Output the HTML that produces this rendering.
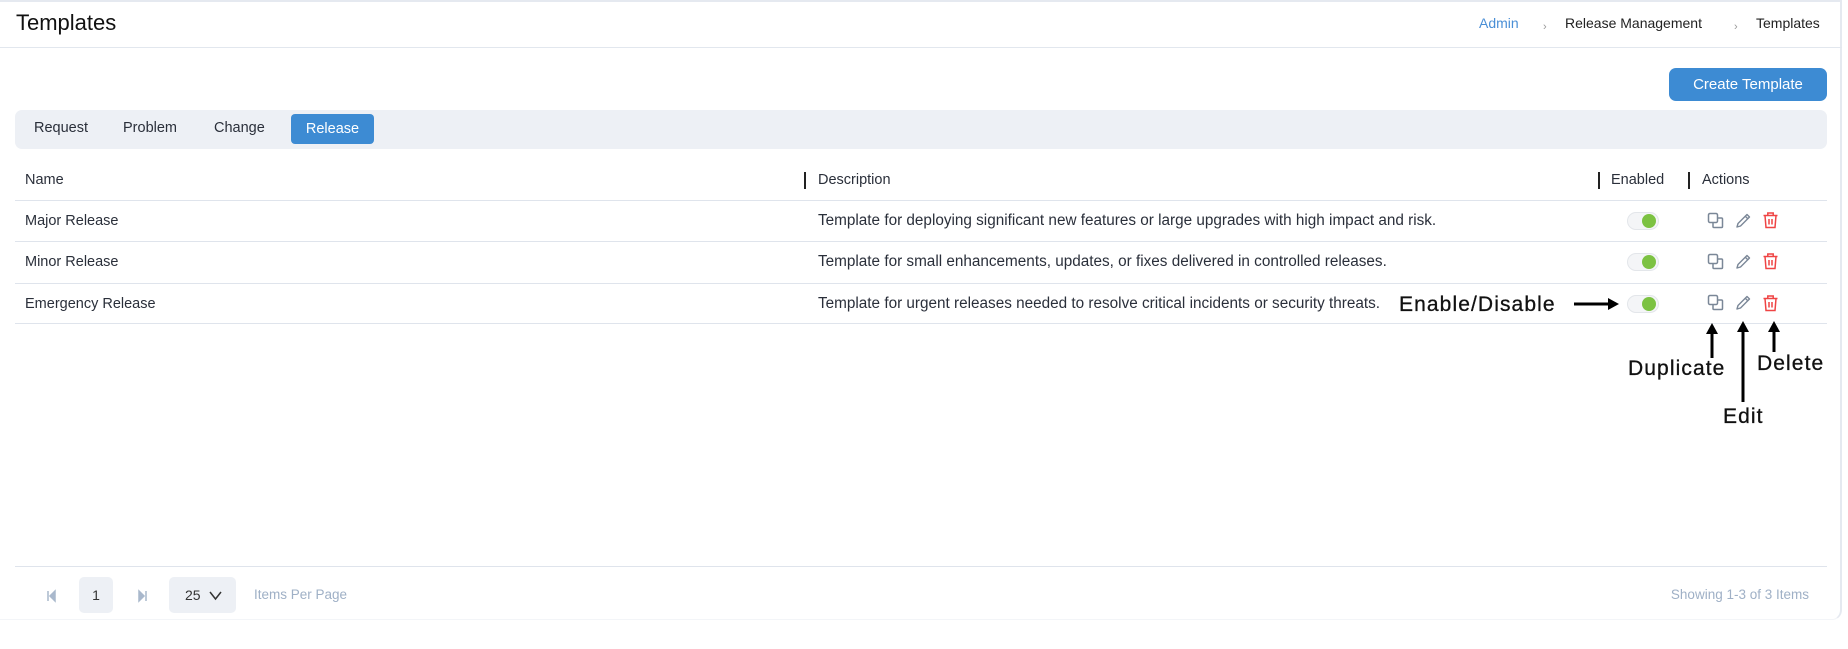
<!DOCTYPE html>
<html><head><meta charset="utf-8"><style>
*{box-sizing:border-box;margin:0;padding:0}
body{width:1848px;height:649px;background:#fff;font-family:"Liberation Sans",sans-serif;position:relative;overflow:hidden;color:#1f2937}
.abs{position:absolute;white-space:nowrap}
.card{position:absolute;left:0;top:0;width:1842px;height:620px;border-top:2px solid #e5e9f0;border-right:2px solid #e5e9f0;border-bottom:1px solid #f3f5f8;border-bottom-right-radius:10px}
.t{font-size:14.5px;color:#2a2f3a}
.d{font-size:15.3px;color:#2a2f3a}
.h{font-size:14.5px;color:#2a2f3a}
.line{position:absolute;left:15px;width:1812px;height:1px;background:#dfe4ec}
.sep{position:absolute;width:1.5px;height:17px;background:#222}
.tog{position:absolute;left:1627px;width:32px;height:18px;border-radius:9px;background:#f4f5f7;border:1px solid #e3e6ea}
.tog i{position:absolute;right:2px;top:1px;width:14px;height:14px;border-radius:50%;background:#7cc242}
.ann{font-size:21px;color:#111;letter-spacing:1.1px;-webkit-text-stroke:0.3px #111}
</style></head><body>
<div class="card"></div>
<div class="abs" style="left:16px;top:10px;font-size:22px;color:#111">Templates</div>
<div class="abs" style="left:0;top:47px;width:1842px;height:1px;background:#e2e7ee"></div>
<div class="abs" style="left:1479px;top:15px;font-size:14px;color:#4a8fd6">Admin</div>
<div class="abs" style="left:1543px;top:21px;font-size:11px;color:#999">›</div>
<div class="abs" style="left:1565px;top:15px;font-size:14px;color:#222">Release Management</div>
<div class="abs" style="left:1734px;top:21px;font-size:11px;color:#999">›</div>
<div class="abs" style="left:1756px;top:15px;font-size:14px;color:#222">Templates</div>

<div class="abs" style="left:1669px;top:68px;width:158px;height:33px;background:#3d8bd3;border-radius:7px;color:#fff;font-size:15px;text-align:center;line-height:33px">Create Template</div>

<div class="abs" style="left:15px;top:110px;width:1812px;height:39px;background:#edf0f5;border-radius:7px"></div>
<div class="abs t" style="left:34px;top:120px">Request</div>
<div class="abs t" style="left:123px;top:120px">Problem</div>
<div class="abs t" style="left:214px;top:120px">Change</div>
<div class="abs" style="left:291px;top:114px;width:83px;height:30px;background:#3d8bd3;border-radius:4px;color:#fff;font-size:14.5px;text-align:center;line-height:30px">Release</div>

<div class="abs h" style="left:25px;top:172px">Name</div>
<div class="sep" style="left:804px;top:172px"></div>
<div class="abs h" style="left:818px;top:172px">Description</div>
<div class="sep" style="left:1598px;top:172px"></div>
<div class="abs h" style="left:1611px;top:172px">Enabled</div>
<div class="sep" style="left:1688px;top:172px"></div>
<div class="abs h" style="left:1702px;top:172px">Actions</div>
<div class="line" style="top:200px"></div>

<div class="abs t" style="left:25px;top:213px">Major Release</div>
<div class="abs d" style="left:818px;top:212px">Template for deploying significant new features or large upgrades with high impact and risk.</div>
<div class="line" style="top:241px"></div>
<div class="abs t" style="left:25px;top:254px">Minor Release</div>
<div class="abs d" style="left:818px;top:253px">Template for small enhancements, updates, or fixes delivered in controlled releases.</div>
<div class="line" style="top:283px"></div>
<div class="abs t" style="left:25px;top:296px">Emergency Release</div>
<div class="abs d" style="left:818px;top:295px">Template for urgent releases needed to resolve critical incidents or security threats.</div>
<div class="line" style="top:323px"></div>

<div class="tog" style="top:212px"><i></i></div>
<div class="tog" style="top:253px"><i></i></div>
<div class="tog" style="top:295px"><i></i></div>

<div class="line" style="top:566px"></div>
<div class="abs" style="left:79px;top:577px;width:34px;height:36px;background:#edf0f5;border-radius:5px;text-align:center;line-height:36px;font-size:14px;color:#333">1</div>
<div class="abs" style="left:169px;top:577px;width:67px;height:36px;background:#edf0f5;border-radius:5px;font-size:14px;color:#333;line-height:36px;padding-left:16px">25</div>
<div class="abs" style="left:254px;top:587px;font-size:13.5px;color:#9fb0c6">Items Per Page</div>
<div class="abs" style="left:1659px;top:587px;font-size:13.5px;color:#9fb0c6;width:150px;text-align:right">Showing 1-3 of 3 Items</div>

<svg class="abs" style="left:0;top:0" width="1848" height="649">
<defs>
<g id="dup" fill="none" stroke="#7a8797" stroke-width="1.5"><rect x="0.5" y="0.5" width="9" height="9" rx="1.5"/><path d="M9.5 5 H13.5 Q14.5 5 14.5 6 V13.5 Q14.5 14.5 13.5 14.5 H6 Q5 14.5 5 13.5 V9.5"/></g>
<g id="ed" fill="none" stroke="#7a8797" stroke-width="1.4" stroke-linejoin="round"><path d="M1 14 L2 10.5 L11 1.5 L13.5 4 L4.5 13 Z M9.3 3.2 L11.8 5.7"/></g>
<g id="del" fill="none" stroke="#ef4444" stroke-width="1.5"><path d="M0.5 3.5 H14.5 M4.8 3.5 V1 H10.2 V3.5 M2 3.5 L3 15.5 H12 L13 3.5 M6 7 V12.5 M9 7 V12.5"/></g>
</defs>
<use href="#dup" x="1708" y="213"/><use href="#ed" x="1736" y="213"/><use href="#del" x="1763" y="212"/>
<use href="#dup" x="1708" y="254"/><use href="#ed" x="1736" y="254"/><use href="#del" x="1763" y="253"/>
<use href="#dup" x="1708" y="295"/><use href="#ed" x="1736" y="295"/><use href="#del" x="1763" y="295"/>
<g stroke="#000" stroke-width="3" fill="#000">
<line x1="1574" y1="304" x2="1610" y2="304"/><path d="M1619 304 L1608 298 L1608 310 Z" stroke="none"/>
<line x1="1712" y1="333" x2="1712" y2="358"/><path d="M1712 323 L1706 334 L1718 334 Z" stroke="none"/>
<line x1="1743" y1="331" x2="1743" y2="402"/><path d="M1743 321 L1737 332 L1749 332 Z" stroke="none"/>
<line x1="1774" y1="331" x2="1774" y2="352"/><path d="M1774 321 L1768 332 L1780 332 Z" stroke="none"/>
</g>
<path d="M48 591 V601 M55 591 L50 596 L55 601 Z" stroke="#a9b8cc" stroke-width="1.5" fill="#a9b8cc"/>
<path d="M146 591 V601 M139 591 L144 596 L139 601 Z" stroke="#a9b8cc" stroke-width="1.5" fill="#a9b8cc"/>
<path d="M210 592 L215.5 599 L221 592" stroke="#333" stroke-width="1.5" fill="none"/>
</svg>
<div class="abs ann" style="left:1399px;top:293px">Enable/Disable</div>
<div class="abs ann" style="left:1628px;top:357px">Duplicate</div>
<div class="abs ann" style="left:1723px;top:405px">Edit</div>
<div class="abs ann" style="left:1757px;top:352px">Delete</div>
</body></html>
